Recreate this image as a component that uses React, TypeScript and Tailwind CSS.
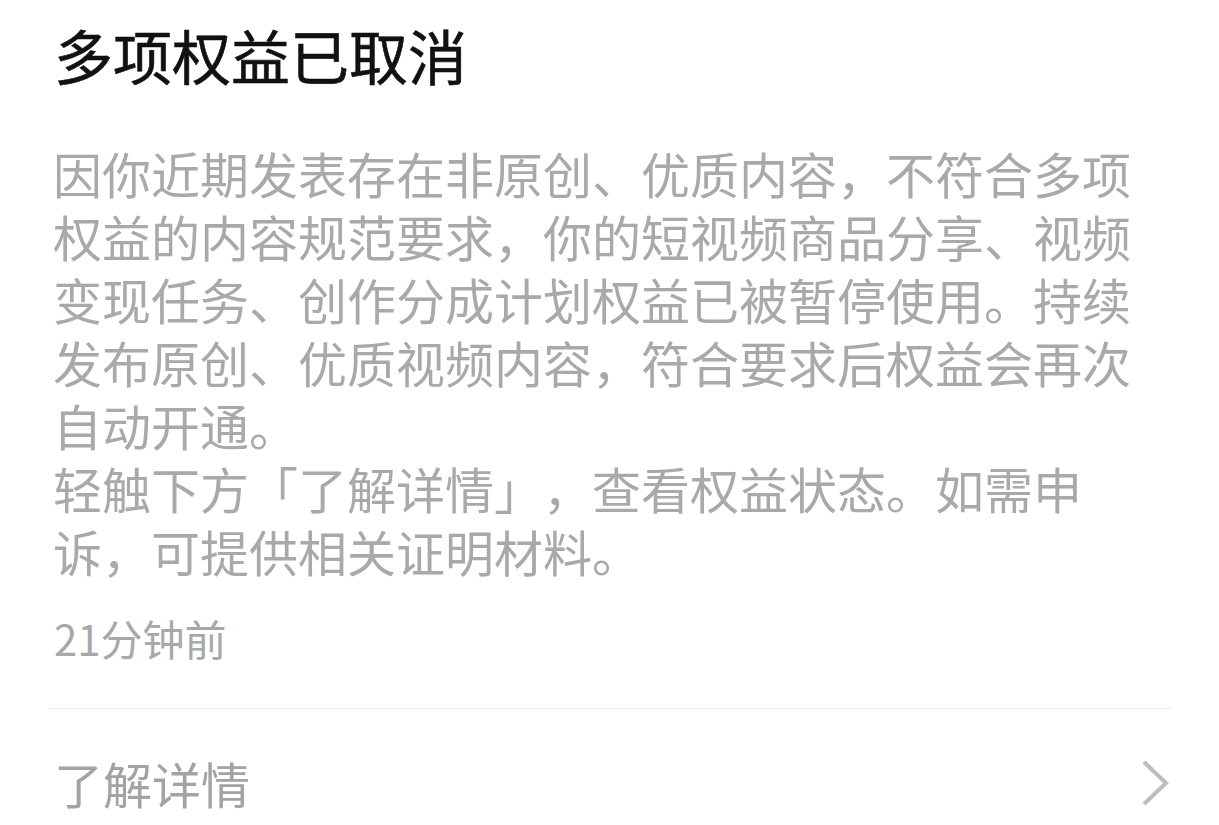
export default function App() {
    return (
        <div className="min-h-screen w-full bg-white" style={{ fontFamily: '"Noto Sans CJK SC", "Noto Sans", sans-serif' }}>
            <div className="px-[48px]">
                {/* Title */}
                <h1 className="pl-[6px] pt-[20px] text-[59px] leading-[70px] font-normal text-[#111111] [-webkit-text-stroke:0.6px_#111111]">多项权益已取消</h1>

                {/* Message body */}
                <div className="mt-[51px] pl-[5px] w-[1100px] text-[49px] leading-[63px] text-[#a9a9a9] [text-spacing-trim:space-all]">
                    <p>因你近期发表存在非原创、优质内容，不符合多项权益的内容规范要求，你的短视频商品分享、视频变现任务、创作分成计划权益已被暂停使用。持续发布原创、优质视频内容，符合要求后权益会再次自动开通。</p>
                    <p>轻触下方「了解详情」，查看权益状态。如需申诉，可提供相关证明材料。</p>
                </div>

                {/* Time */}
                <div className="mt-[28px] pl-[6px] text-[42px] leading-[56px] text-[#a8a8a8]">21分钟前</div>

                {/* Divider */}
                <div className="mt-[42px] h-px bg-[#ececec]"></div>

                {/* Details row */}
                <div className="flex items-center justify-between pt-[42px] h-[116px]">
                    <span className="pl-[6px] text-[49px] leading-[64px] text-[#a3a3a3] -mt-[10px]">了解详情</span>
                    <svg className="w-[30px] h-[46px] -mt-[10px]" viewBox="0 0 30 46" fill="none">
                        <polyline points="3,2 25,23 3,44" stroke="#bdbdbd" strokeWidth="4" strokeLinecap="butt" strokeLinejoin="miter" />
                    </svg>
                </div>
            </div>
        </div>
    );
}
